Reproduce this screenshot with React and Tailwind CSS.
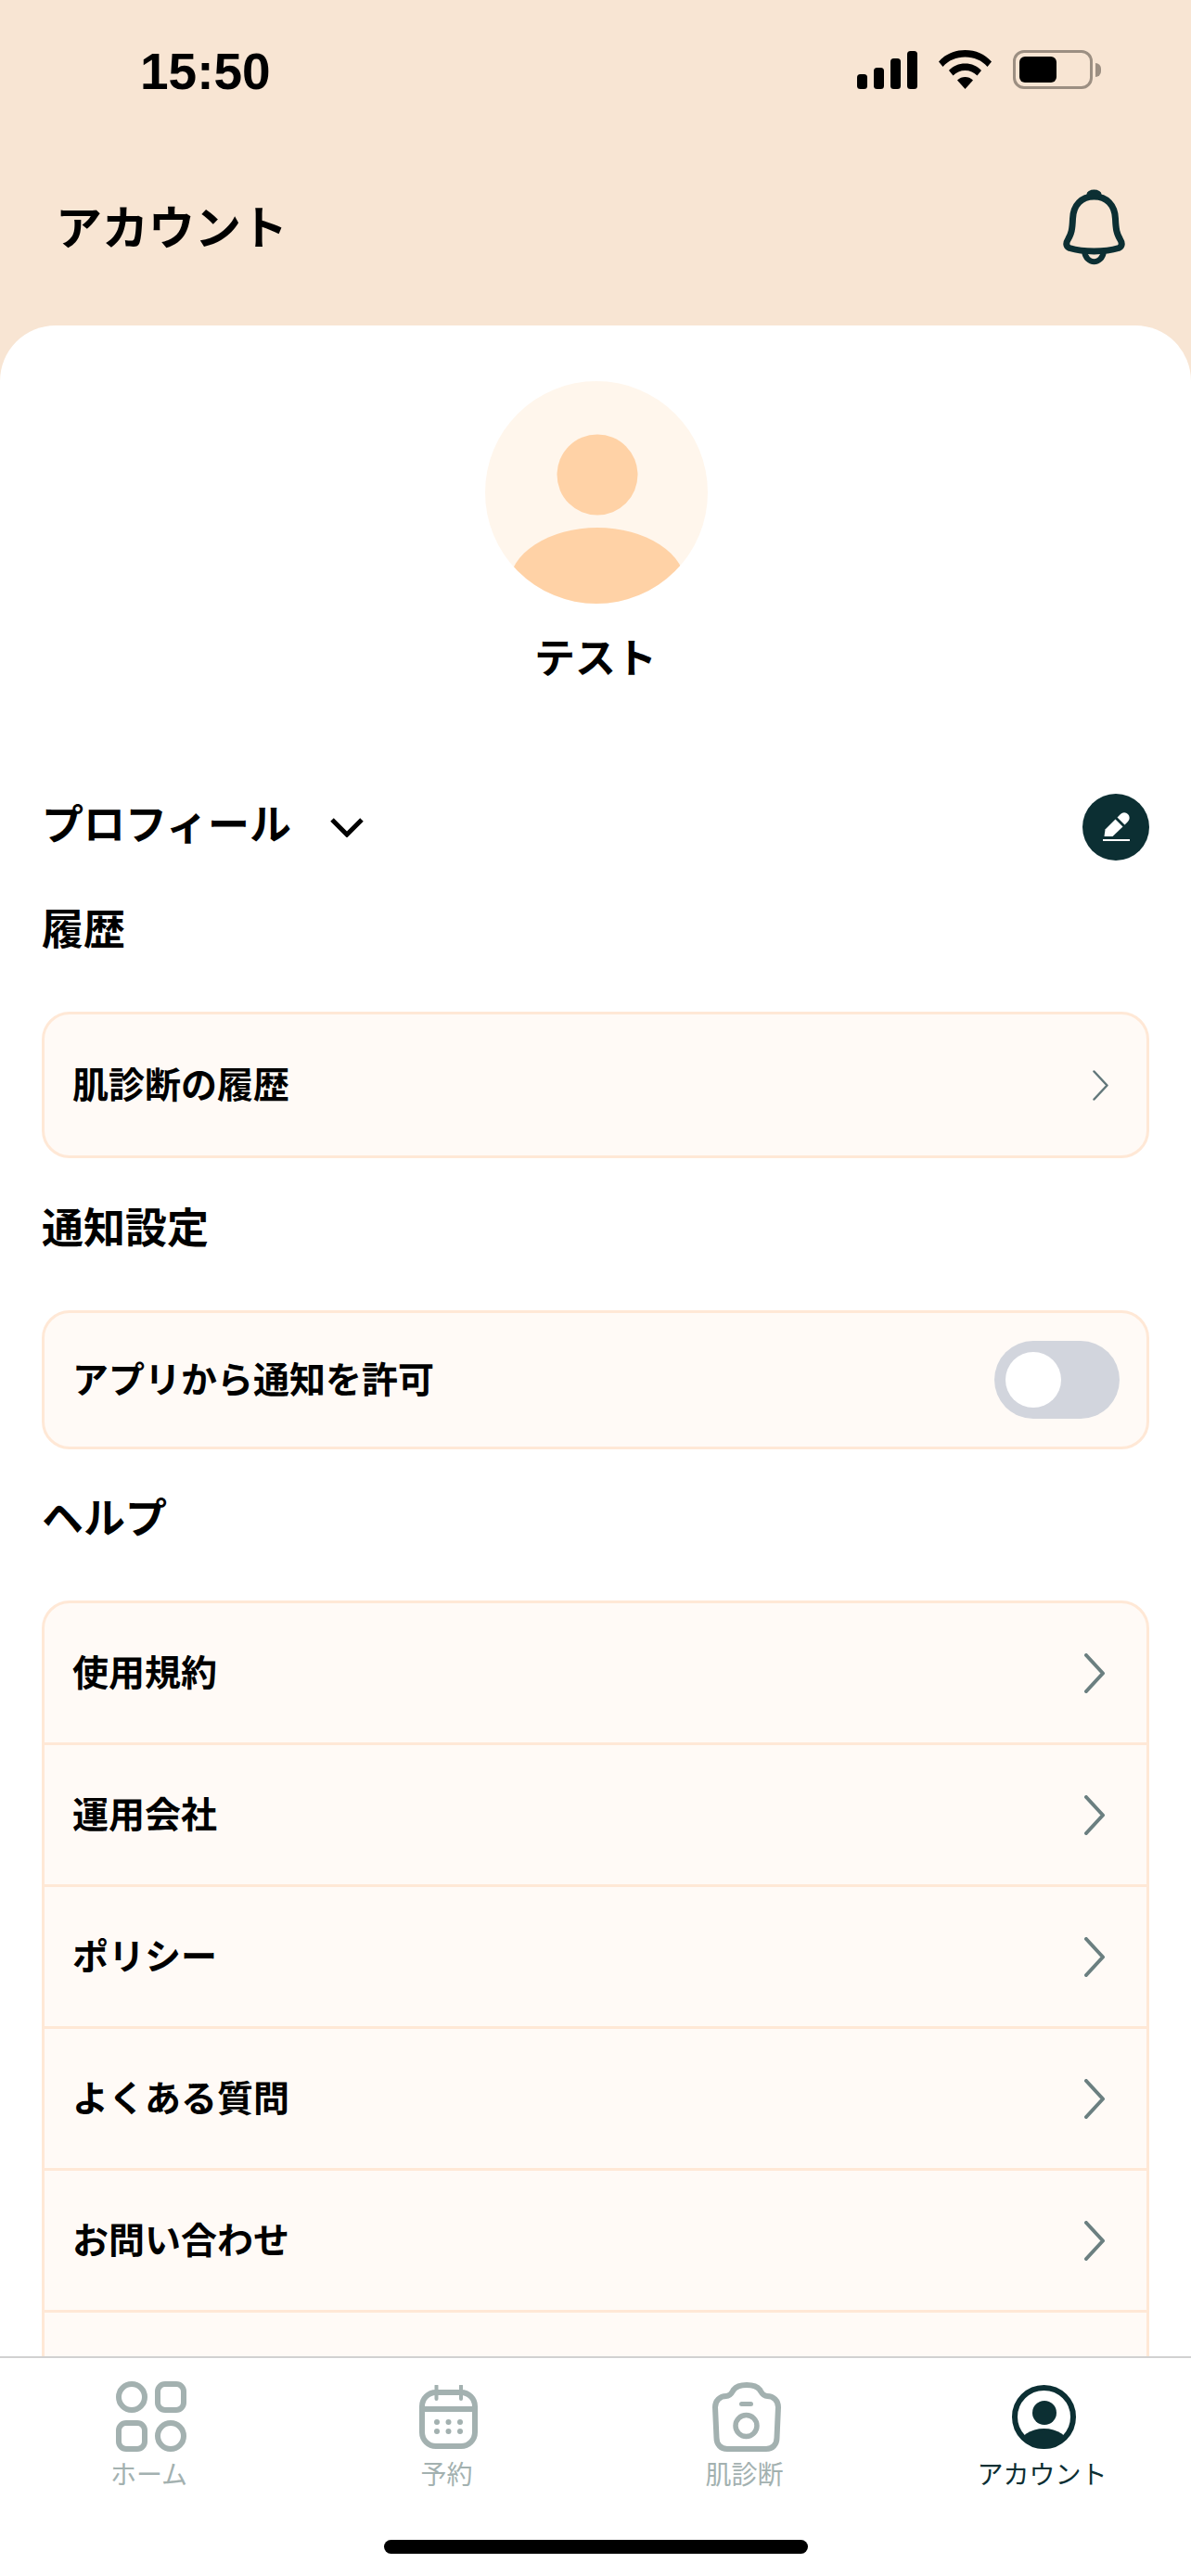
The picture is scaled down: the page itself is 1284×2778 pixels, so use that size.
const helpItems = ['使用規約', '運用会社', 'ポリシー', 'よくある質問', 'お問い合わせ', ''];

const StatusIcons = () => (
  <div className="flex items-center gap-[23px] mb-1">
    <svg width="65" height="41" viewBox="0 0 65 41" fill="#000">
      <rect x="0" y="25" width="11" height="16" rx="3.5" />
      <rect x="18" y="18" width="11" height="23" rx="3.5" />
      <rect x="36" y="8" width="11" height="33" rx="3.5" />
      <rect x="54" y="0" width="11" height="41" rx="3.5" />
    </svg>
    <svg width="57" height="42" viewBox="0 0 57 42" fill="#000">
      <path d="M28.5 0C40 0 50 4.500 57 12.500L52.500 18C46.500 11 38 7.500 28.500 7.500C19 7.500 10.500 11 4.500 18L0 12.500C7 4.500 17 0 28.500 0Z" />
      <path d="M28.500 14.500C35.500 14.500 41.500 17 46 22L41.500 27.500C38 24 33.500 22 28.500 22C23.500 22 19 24 15.500 27.500L11 22C15.500 17 21.500 14.500 28.500 14.500Z" />
      <path d="M28.500 29C31.500 29 34.500 30 37 32.500L28.500 42L20 32.500C22.500 30 25.500 29 28.500 29Z" />
    </svg>
    <div className="flex items-center gap-[3px]">
      <div className="w-[86px] h-[42px] rounded-[12px] border-[3px] border-[#9c8f82] p-[4px] flex">
        <div className="w-[40px] h-full rounded-[6px] bg-black" />
      </div>
      <div className="w-[6px] h-[15px] rounded-r-full bg-[#9c8f82]" />
    </div>
  </div>
);

const BellIcon = () => (
  <svg width="67" height="82" viewBox="0 0 67 82" fill="none" stroke="#0c2f33" strokeWidth="7" strokeLinejoin="round">
    <path d="M33.500 8C20 8 11 17 10.500 32C10 44 9 48 5.500 54C3 58 3 62 7 63.500C22 68 45 68 60 63.500C64 62 64 58 61.500 54C58 48 57 44 56.500 32C56 17 47 8 33.500 8Z" />
    <ellipse cx="33.500" cy="5.500" rx="8" ry="5" fill="#0c2f33" stroke="none" />
    <path d="M23 67C25 82 42 82 44 67" strokeWidth="6" />
  </svg>
);

const Avatar = () => (
  <svg width="240" height="240" viewBox="0 0 240 240">
    <defs>
      <clipPath id="avatarClip">
        <circle cx="120" cy="120" r="120" />
      </clipPath>
    </defs>
    <circle cx="120" cy="120" r="120" fill="#fff6ec" />
    <circle cx="121" cy="101" r="43.500" fill="#ffd2a6" />
    <ellipse cx="121" cy="220" rx="95" ry="62" fill="#ffd2a6" clipPath="url(#avatarClip)" />
  </svg>
);

const EditButton = () => (
  <div className="w-[72px] h-[72px] rounded-full bg-[#0c2f33]">
    <svg width="72" height="72" viewBox="0 0 72 72" fill="#fff">
      <path d="M23.500 46L24.500 38.500L35.500 27.500L43.500 35.500L32.500 46Z" />
      <path d="M37.500 25.500L41 22A5.600 5.600 0 0 1 49 30L45.500 33.500Z" />
      <rect x="22" y="49" width="29" height="2" />
    </svg>
  </div>
);

const Chevron = ({ thin }) =>
  thin ? (
    <svg width="17" height="33" viewBox="0 0 17 33" fill="none" stroke="#62777a" strokeWidth="2.500" strokeLinecap="round" strokeLinejoin="round">
      <path d="M1.500 1.500L15.500 16.500L1.500 31.500" />
    </svg>
  ) : (
    <svg width="22" height="43" viewBox="0 0 22 43" fill="none" stroke="#6b7f80" strokeWidth="4" strokeLinecap="round" strokeLinejoin="round">
      <path d="M2 2L20 21.500L2 41" />
    </svg>
  );

const HomeIcon = () => (
  <svg width="76" height="76" viewBox="0 0 76 76" fill="none" stroke="#a3b1b0" strokeWidth="6">
    <circle cx="17" cy="17" r="14" />
    <rect x="45" y="3" width="28" height="28" rx="8" />
    <rect x="3" y="45" width="28" height="28" rx="8" />
    <circle cx="59" cy="59" r="14" />
  </svg>
);

const CalendarIcon = () => (
  <svg width="63" height="69" viewBox="0 0 63 69" fill="none" stroke="#a3b1b0" strokeWidth="6">
    <rect x="3" y="8" width="57" height="58" rx="15" />
    <path d="M3 26H60" />
    <path d="M18.500 1V15M45 1V15" strokeWidth="4" strokeLinecap="round" />
    <g fill="#a3b1b0" stroke="none">
      <circle cx="19" cy="40" r="3" />
      <circle cx="31.500" cy="40" r="3" />
      <circle cx="44" cy="40" r="3" />
      <circle cx="19" cy="50" r="3" />
      <circle cx="31.500" cy="50" r="3" />
      <circle cx="44" cy="50" r="3" />
    </g>
  </svg>
);

const CameraIcon = () => (
  <svg width="74" height="75" viewBox="0 0 74 75" fill="none" stroke="#a3b1b0" strokeWidth="6">
    <path d="M3 27C3 20 8 15 15 15C20 15 21 11 23 8C26 4 31 3 37 3C43 3 48 4 51 8C53 11 54 15 59 15C66 15 71 20 71 27L69.500 60C69.500 67 65 72 58 72H16C9 72 4.500 67 4.500 60Z" />
    <circle cx="36.500" cy="47" r="11.500" strokeWidth="5.500" />
    <rect x="29" y="21" width="15" height="5" rx="2.500" fill="#a3b1b0" stroke="none" />
  </svg>
);

const AccountIcon = () => (
  <svg width="69" height="69" viewBox="0 0 69 69">
    <defs>
      <clipPath id="accountClip">
        <circle cx="34.500" cy="34.500" r="34" />
      </clipPath>
    </defs>
    <circle cx="34.500" cy="34.500" r="31.500" fill="#fff" stroke="#0c2f33" strokeWidth="6" />
    <circle cx="35" cy="30" r="13" fill="#0c2f33" />
    <ellipse cx="34.500" cy="66" rx="27" ry="19" fill="#0c2f33" clipPath="url(#accountClip)" />
  </svg>
);

const tabs = [
  { label: 'ホーム', icon: <HomeIcon /> },
  { label: '予約', icon: <CalendarIcon /> },
  { label: '肌診断', icon: <CameraIcon /> },
  { label: 'アカウント', icon: <AccountIcon />, active: true },
];

const SectionTitle = ({ children, className }) => (
  <h2 className={`h-[60px] text-[45px] leading-[54px] font-semibold text-black ${className}`}>{children}</h2>
);

export default function App() {
  return (
    <div className="w-[1284px] h-[2778px] flex flex-col overflow-hidden bg-[#f8e5d3] font-['Noto_Sans_CJK_JP','Liberation_Sans',sans-serif]">
      {/* status bar */}
      <div className="h-[154px] shrink-0 pl-[151px] pr-[97px] pt-[47px] flex justify-between items-start">
        <span className="font-['Liberation_Sans',sans-serif] text-[55px] leading-[60px] font-bold text-black">15:50</span>
        <div className="h-[60px] flex items-center">
          <StatusIcons />
        </div>
      </div>

      {/* header */}
      <div className="h-[197px] shrink-0 pl-[60px] pr-[71px] pt-[31px]">
        <div className="h-[120px] flex items-center justify-between">
          <h1 className="h-[60px] text-[50px] leading-[54px] font-semibold text-black">アカウント</h1>
          <BellIcon />
        </div>
      </div>

      {/* content */}
      <main className="flex-1 min-h-0 overflow-hidden bg-white rounded-t-[60px] px-[45px]">
        <div className="mt-[60px] flex flex-col items-center">
          <div className="ml-[2px]">
            <Avatar />
          </div>
          <p className="mt-[29px] h-[60px] text-[44px] leading-[54px] font-semibold text-black">テスト</p>
        </div>

        <div className="mt-[116px] h-[72px] flex items-center justify-between">
          <div className="flex items-center gap-[42px]">
            <SectionTitle className="mb-[4px]">プロフィール</SectionTitle>
            <svg width="36" height="22" viewBox="0 0 36 22" fill="none" stroke="#000" strokeWidth="5">
              <path d="M2 3L18 19L34 3" />
            </svg>
          </div>
          <EditButton />
        </div>

        <SectionTitle className="mt-[45px]">履歴</SectionTitle>
        <div className="mt-[58px] h-[158px] flex items-center justify-between rounded-[30px] border-[3px] border-[#ffe8d6] bg-[#fffaf6] pl-[30px] pr-[41px]">
          <span className="h-[56px] text-[39px] leading-[50px] font-semibold text-black">肌診断の履歴</span>
          <Chevron thin />
        </div>

        <SectionTitle className="mt-[46px]">通知設定</SectionTitle>
        <div className="mt-[58px] h-[150px] flex items-center justify-between rounded-[30px] border-[3px] border-[#ffe8d6] bg-[#fffaf6] pl-[30px] pr-[29px]">
          <span className="h-[56px] text-[39px] leading-[50px] font-semibold text-black">アプリから通知を許可</span>
          <div className="w-[135px] h-[84px] rounded-full bg-[#d2d5dd] p-[12px]">
            <div className="w-[60px] h-[60px] rounded-full bg-white" />
          </div>
        </div>

        <SectionTitle className="mt-[45px]">ヘルプ</SectionTitle>
        <div className="mt-[58px] rounded-t-[30px] border-[3px] border-[#ffe8d6] bg-[#fffaf6]">
          {helpItems.map((item) => (
            <div key={item} className="h-[153px] flex items-center justify-between border-b-[3px] border-[#ffe8d6] pl-[30px] pr-[45px] last:border-b-0">
              <span className="h-[56px] text-[39px] leading-[50px] font-semibold text-black">{item}</span>
              {item && <Chevron />}
            </div>
          ))}
        </div>
      </main>

      {/* tab bar */}
      <nav className="h-[237px] shrink-0 bg-white border-t-2 border-[#d1d1d1]">
        <div className="grid grid-cols-4 pt-[23px]">
          {tabs.map((tab) => (
            <div key={tab.label} className="flex flex-col items-center gap-[5px]">
              <div className="h-[80px] ml-1 flex items-center justify-center">{tab.icon}</div>
              <span className={`h-[36px] text-[28px] leading-[33px] ${tab.active ? 'text-[#0c2f33]' : 'text-[#a3b1b0]'}`}>{tab.label}</span>
            </div>
          ))}
        </div>
        <div className="mt-[52px] mx-auto w-[457px] h-[15px] rounded-full bg-black" />
      </nav>
    </div>
  );
}
